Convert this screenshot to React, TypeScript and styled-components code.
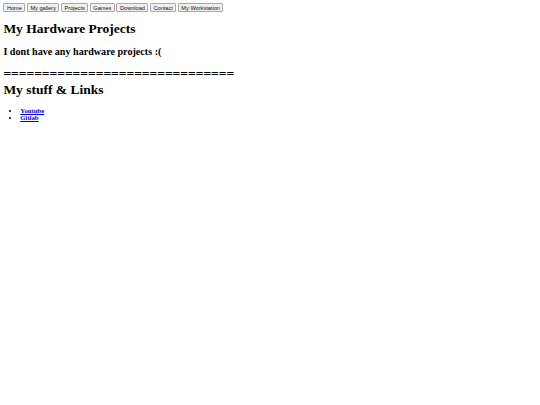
import { createGlobalStyle, styled } from 'styled-components';

// the reference is a 1280x960 page shown at 540x405
const S = 540 / 1280;
const px = (n: number) => `${(n * S).toFixed(3)}px`;

const GlobalStyle = createGlobalStyle`
  html, body {
    background: #fff;
  }
  body {
    margin: ${px(8)};
    font-family: "Liberation Serif", "Times New Roman", serif;
    font-size: ${px(16)};
    color: #000;
  }
`;

const NavBar = styled.div`
  display: flex;
  flex-wrap: wrap;
  gap: ${px(3.6)};
`;

const NavButton = styled.button`
  appearance: none;
  font-family: "Liberation Sans", Arial, sans-serif;
  font-size: ${px(13.333)};
  line-height: ${px(15)};
  padding: ${px(1)} ${px(6)};
  border: 1px solid #a9a9a9;
  border-radius: 1px;
  background: #f0f0f0;
  color: #111;
  height: ${px(21)};
  display: flex;
  align-items: center;
`;

const Title = styled.h1`
  font-size: ${px(32)};
  margin: ${px(21.44)} 0;
`;

const SubTitle = styled.h2`
  font-size: ${px(24)};
  margin: ${px(19.92)} 0;
`;

const LinkList = styled.ul`
  margin: ${px(16)} 0;
  padding-left: ${px(40)};
`;

const LinkItem = styled.li`
  font-weight: bold;
`;

const Link = styled.a`
  color: #0000ee;
  text-decoration: underline;
`;

const pages = ['Home', 'My gallery', 'Projects', 'Games', 'Download', 'Contact', 'My Workstation'];

export default function App() {
  return (
    <>
      <GlobalStyle />
      <NavBar>
        {pages.map((p) => (
          <NavButton key={p}>{p}</NavButton>
        ))}
      </NavBar>
      <Title>My Hardware Projects</Title>
      <SubTitle>I dont have any hardware projects :(</SubTitle>
      <Title>
        {'='.repeat(30)}
        <br />
        My stuff &amp; Links
      </Title>
      <LinkList>
        <LinkItem>
          <Link href="#">Youtube</Link>
        </LinkItem>
        <LinkItem>
          <Link href="#">Gitlab</Link>
        </LinkItem>
      </LinkList>
    </>
  );
}
